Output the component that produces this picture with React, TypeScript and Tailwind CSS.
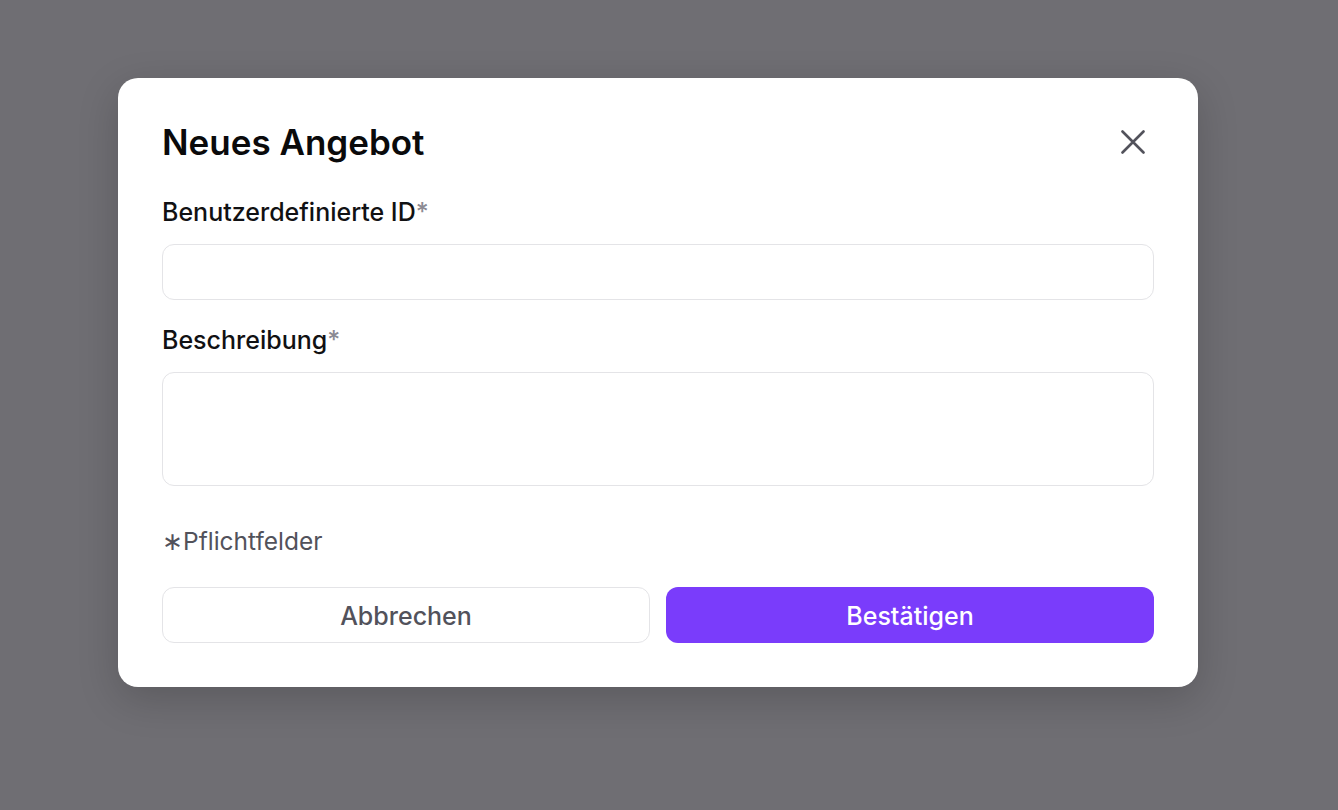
import React from "react";

function CloseIcon() {
  return (
    <svg width="24" height="24" viewBox="0 0 24 24" fill="none" aria-hidden="true">
      <path d="M1.5 1.5L22.5 22.5M22.5 1.5L1.5 22.5" stroke="#52525b" strokeWidth="2.6" strokeLinecap="round" />
    </svg>
  );
}

function Label({ children }: { children: React.ReactNode }) {
  return (
    <label className="block text-[25px] leading-8 font-medium text-[#111113]">
      {children}
      <span className="text-[#8b8a93]">*</span>
    </label>
  );
}

export default function App() {
  return (
    <div
      className="w-full h-[810px] bg-[#6f6e73] flex pt-[78px] pl-[118px]"
      style={{ fontFamily: "Inter, 'Noto Sans', sans-serif" }}
    >
      <div className="w-[1080px] h-[609px] bg-white rounded-[20px] shadow-[0_12px_40px_rgba(0,0,0,0.18)] px-[44px] pt-[44px] pb-[44px] flex flex-col">
        <div className="flex items-center justify-between h-10">
          <h2 className="text-[35px] leading-10 font-semibold text-[#0a0a0b]">Neues Angebot</h2>
          <button className="w-6 h-6 flex items-center justify-center mr-[9px]">
            <CloseIcon />
          </button>
        </div>

        <div className="mt-[34px]">
          <Label>Benutzerdefinierte ID</Label>
        </div>
        <input className="mt-4 h-[56px] w-full rounded-xl border border-[#e4e4e7] outline-none px-4 text-[20px]" />

        <div className="mt-6">
          <Label>Beschreibung</Label>
        </div>
        <textarea className="mt-4 h-[115px] w-full rounded-xl border border-[#e4e4e7] outline-none px-4 py-3 resize-none text-[20px]" />

        <p className="mt-[39px] text-[24.5px] leading-8 text-[#52525b]">∗Pflichtfelder</p>

        <div className="mt-[30px] grid grid-cols-2 gap-4">
          <button className="h-[56px] pt-[3px] rounded-xl border border-[#e4e4e7] bg-white text-[25px] font-medium text-[#52525b]">
            Abbrechen
          </button>
          <button className="h-[56px] pt-[3px] rounded-xl bg-[#7a3cfb] text-[25px] font-medium text-white">
            Bestätigen
          </button>
        </div>
      </div>
    </div>
  );
}
